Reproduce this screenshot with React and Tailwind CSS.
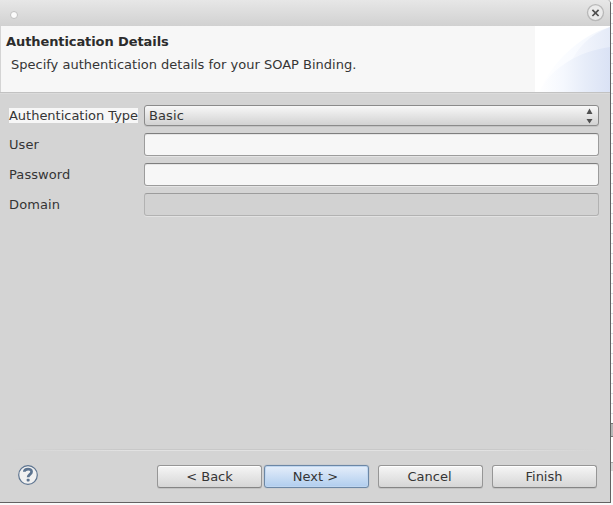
import React from "react";

function TextField({ disabled }) {
  return (
    <div
      className={
        disabled
          ? "h-[23px] rounded-[3px] border border-[#b2b2b2] border-t-[#9c9c9c] bg-[#d2d2d2] shadow-[0_1px_0_#e2e2e2]"
          : "h-[23px] rounded-[3px] border border-[#9c9c9c] border-t-[#7f7f7f] bg-[#f7f7f7] shadow-[0_1px_0_#e4e4e4,inset_0_1px_0_#e6e6e6]"
      }
    />
  );
}

function Button({ children, primary, className = "" }) {
  const look = primary
    ? "border-[#6c87a5] bg-linear-to-b from-[#e5eefa] to-[#b0cdee] shadow-[inset_0_0_0_1px_#bfd6f0,0_0_1px_#7b93ad]"
    : "border-[#969696] border-b-[#858585] bg-linear-to-b from-[#f6f6f6] to-[#d6d6d6] shadow-[inset_0_1px_0_#ffffff,0_1px_0_#c2c2c2]";
  return (
    <button className={`flex h-[23px] w-[105px] items-center justify-center rounded-[3px] border ${look} ${className}`}>
      {children}
    </button>
  );
}

function Row({ label, children, className = "" }) {
  return (
    <div className={`flex items-center ${className}`}>
      <div className="w-[135px] shrink-0">{label}</div>
      <div className="min-w-0 flex-1">{children}</div>
    </div>
  );
}

function Banner() {
  return (
    <svg width="75" height="66" viewBox="0 0 75 66" className="block">
      <defs>
        <linearGradient id="outer" gradientUnits="userSpaceOnUse" x1="3" x2="75" y1="0" y2="0">
          <stop offset="0" stopColor="#ffffff" />
          <stop offset="0.5" stopColor="#f9fbff" />
          <stop offset="1" stopColor="#f1f5fc" />
        </linearGradient>
        <linearGradient id="middle" gradientUnits="userSpaceOnUse" x1="34" x2="75" y1="0" y2="0">
          <stop offset="0" stopColor="#f7f9fe" />
          <stop offset="1" stopColor="#e5ebf8" />
        </linearGradient>
        <linearGradient id="inner" gradientUnits="userSpaceOnUse" x1="3" x2="75" y1="0" y2="0">
          <stop offset="0" stopColor="#ffffff" />
          <stop offset="0.35" stopColor="#f5f8fe" />
          <stop offset="0.65" stopColor="#e7edf9" />
          <stop offset="1" stopColor="#dae2f5" />
        </linearGradient>
      </defs>
      <rect width="75" height="66" fill="#fff" />
      <path d="M4 66C16 38 43 10 75 1V66Z" fill="url(#outer)" />
      <path d="M34 40C42 22 54 9 75 1V66H34Z" fill="url(#middle)" />
      <path d="M4 66C15 43 43 25 75 21V66Z" fill="url(#inner)" />
    </svg>
  );
}

export default function App() {
  return (
    <div className="flex h-[505px] w-[613px] overflow-hidden bg-[#f9f9f9] text-[13px] leading-[15px] text-[#353535] [font-family:'DejaVu_Sans',sans-serif]">
      <div className="flex h-[503px] w-[611px] flex-col rounded-tr-[4px] border-r border-b border-[#626262] bg-[#d4d4d4]">
        <div className="flex h-[26px] shrink-0 items-center justify-between rounded-tr-[3px] bg-linear-to-b from-[#e7e7e7] to-[#d1d1d1] pr-[6px] pl-[10px]">
          <div className="mt-[4px] size-[8px] rounded-full border border-[#c0c0c0] bg-[#fbfbfb]" />
          <svg width="18" height="18" viewBox="0 0 18 18" className="-mt-[1px] overflow-visible">
            <circle cx="9.5" cy="8.6" r="8" fill="#ebebeb" stroke="#b8b8b8" strokeWidth="1.3" />
            <path d="M6.4 5.8L12.6 12M12.6 5.8L6.4 12" stroke="#505050" strokeWidth="1.7" />
          </svg>
        </div>
        <div className="ml-px flex h-[66px] shrink-0 justify-between bg-[#f7f7f7]">
          <div className="pt-[8px] pl-[5px]">
            <div className="font-bold tracking-[-0.09px] text-[#2c2c2c]">Authentication Details</div>
            <div className="mt-[8px] pl-[5px]">Specify authentication details for your SOAP Binding.</div>
          </div>
          <Banner />
        </div>
        <div className="h-[2px] shrink-0 border-t border-[#c2c2c2] bg-[#dbdbdb]" />
        <div className="flex flex-col pt-[11px] pr-[11px] pl-[9px]">
          <Row label={<span className="block w-[129px] bg-[#f7f7f7] tracking-[-0.02px] whitespace-nowrap">Authentication Type</span>}>
            <div className="flex h-[21px] items-center justify-between rounded-[3px] border border-[#8b8b8b] bg-linear-to-b from-[#f8f8f8] to-[#d2d2d2] pr-[5px] pl-[4px] tracking-[0.12px] shadow-[0_1px_0_#c3c3c3]">
              <span>Basic</span>
              <svg width="7" height="16" viewBox="0 0 7 16">
                <path d="M3.5 0.5L6.5 6H0.5Z M3.5 15.5L0.5 11H6.5Z" fill="#505050" />
              </svg>
            </div>
          </Row>
          <Row label="User" className="mt-[7px] tracking-[0.1px]"><TextField /></Row>
          <Row label="Password" className="mt-[7px] tracking-[0.08px]"><TextField /></Row>
          <Row label="Domain" className="mt-[7px] tracking-[0.12px]"><TextField disabled /></Row>
        </div>
        <div className="mt-auto">
          <div className="mx-[9px] h-px bg-[linear-gradient(to_right,#d4d4d4,#c8c8c8_20%,#c8c8c8_80%,#d4d4d4)]" />
          <div className="mx-[9px] h-px bg-[linear-gradient(to_right,#d4d4d4,#e2e2e2_20%,#e2e2e2_80%,#d4d4d4)]" />
          <div className="flex h-[51px] items-center pr-[13px] pl-[18px]">
            <svg width="20" height="20" viewBox="0 0 20 20" className="-mt-[3px]">
              <circle cx="10" cy="10" r="9.3" fill="#f1f1f1" stroke="#5d7490" strokeWidth="1.2" />
              <path d="M6.3 6.8C6.5 3.2 13.6 3.1 13.6 6.7C13.6 9.4 10.1 9.3 10.1 12.3" fill="none" stroke="#5d7490" strokeWidth="2.7" />
              <rect x="8.7" y="13.8" width="2.9" height="2.7" rx="0.8" fill="#5d7490" />
            </svg>
            <div className="ml-auto flex">
              <Button>&lt; Back</Button>
              <Button primary className="ml-[2px] pr-[2px]">Next &gt;</Button>
              <Button className="ml-[9px] pr-[2px]">Cancel</Button>
              <Button className="ml-[9px] pr-px">Finish</Button>
            </div>
          </div>
        </div>
      </div>
      <div className="flex w-[2px] flex-col">
        <div className="h-[423px] shrink-0 bg-[#fdfdfd] bg-[repeating-linear-gradient(to_bottom,transparent_0_3px,#dde1e6_3px_4px,transparent_4px_10px)]" />
        <div className="h-[14px] shrink-0 border-y border-[#777] bg-[#b8b8b8]" />
        <div className="h-[25px] shrink-0 bg-white" />
        <div className="h-[9px] shrink-0 border-t border-[#aaa] bg-[#d8d8d8]" />
      </div>
    </div>
  );
}
